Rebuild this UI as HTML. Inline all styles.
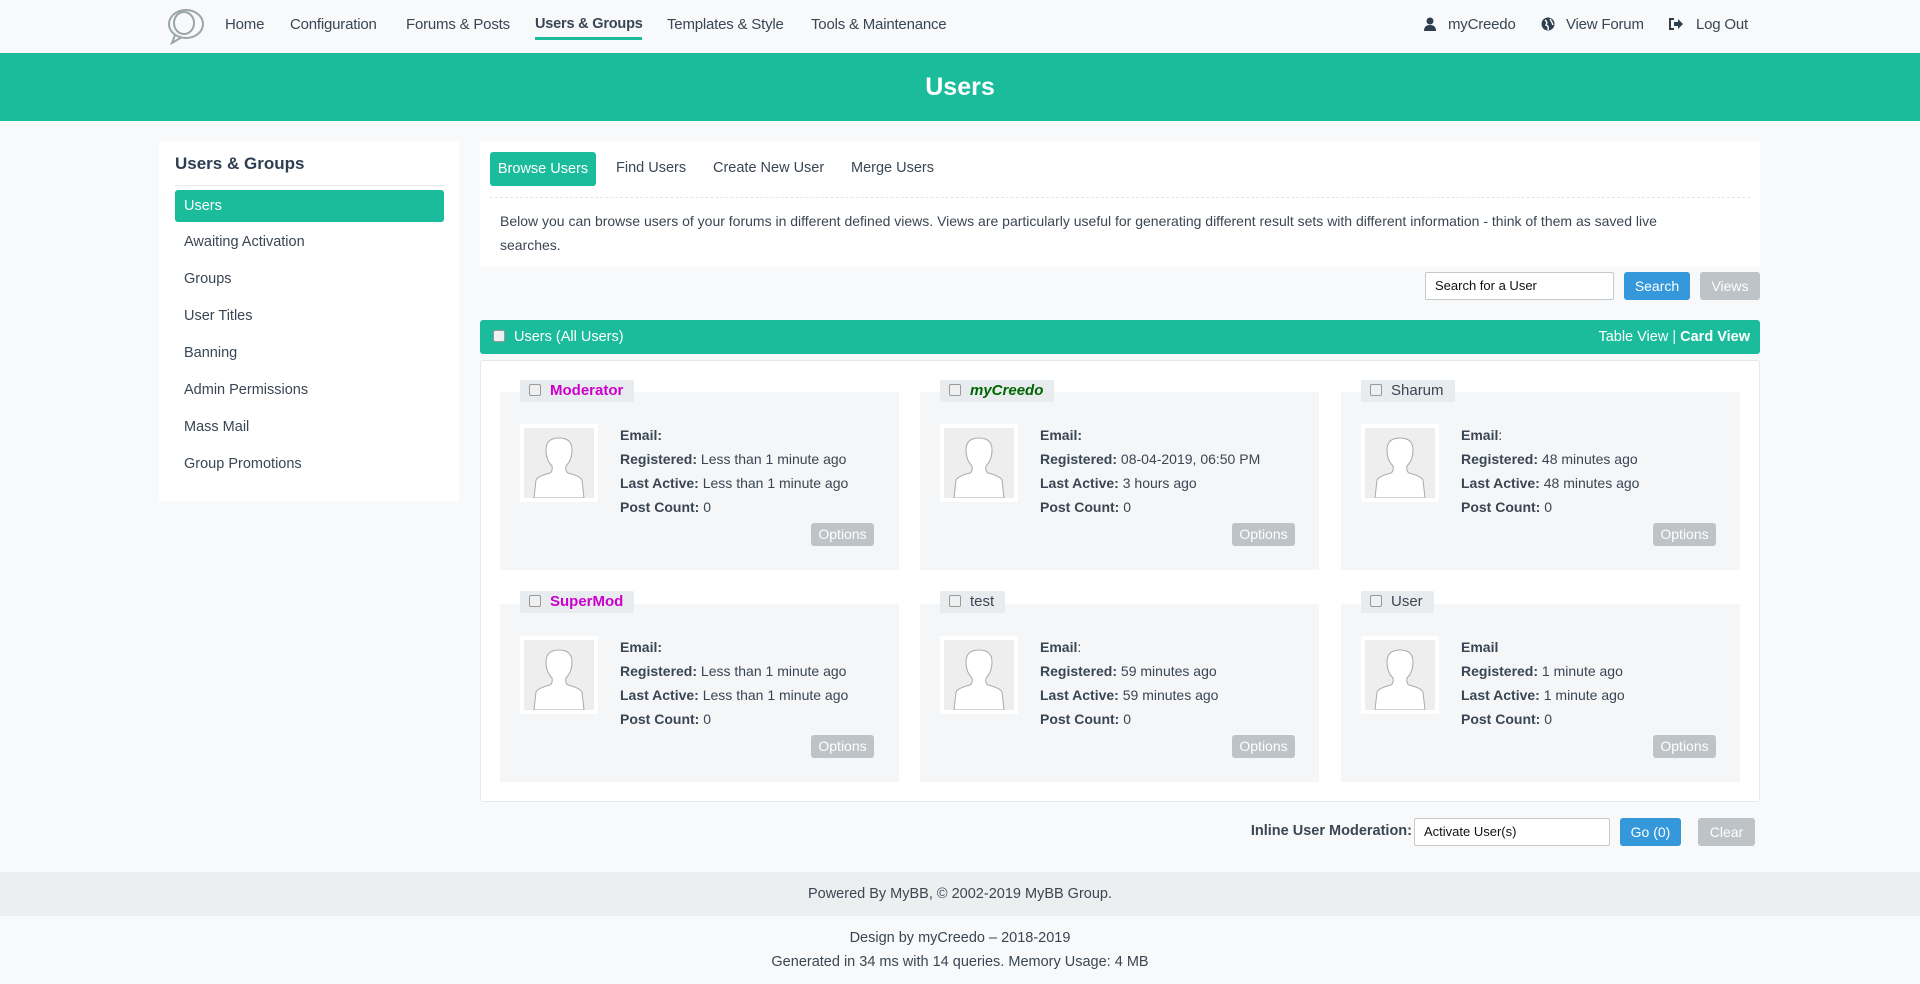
<!DOCTYPE html>
<html><head><meta charset="utf-8"><style>
*{box-sizing:border-box;margin:0;padding:0}
body{width:1920px;height:984px;background:#f7f9fa;font-family:"Liberation Sans",sans-serif;color:#3a4653;font-size:15px;position:relative;overflow:hidden}
.a{position:absolute;white-space:nowrap}
.nav{top:16px;font-size:15px;color:#3a4653;letter-spacing:-0.2px}
.banner{left:0;top:53px;width:1920px;height:68px;background:#1abc9c;color:#fff;font-size:25px;font-weight:bold;text-align:center;line-height:68px}
.box{background:#fff}
.side{left:159px;top:141px;width:300px;height:360px}
.si{left:175px;width:269px;height:32px;line-height:32px;padding-left:9px;font-size:14.5px}
.btn{border-radius:3px;color:#fff;font-size:14px;text-align:center}
.card{background:#f4f6f8;width:399px;height:178px}
.lbl{background:#e9ecee;height:22px;line-height:22px;font-size:15px;padding:0 11px 0 9px;border-radius:2px}
.cb{display:inline-block;width:12px;height:12px;border:1px solid #999;border-radius:2px;background:#f0f0f0;margin-right:9px;vertical-align:-1px}
.av{width:78px;height:78px;background:#fff;padding:4px}
.av div{width:100%;height:100%;background:#eee;overflow:hidden}
.info{font-size:14px;line-height:24px}
.info b{font-weight:bold}
.opt{background:#bdc3c7;width:63px;height:23px;line-height:23px}
</style></head><body>
<svg class="a" style="left:166px;top:7px" width="40" height="38" viewBox="0 0 40 38"><g fill="none" stroke="#9aa5a6" stroke-width="2"><ellipse cx="20" cy="17" rx="17" ry="14"/><ellipse cx="18" cy="16" rx="10" ry="11"/><path d="M9 28 L6 36 L16 30"/></g></svg>
<div class="a nav" style="left:225px">Home</div>
<div class="a nav" style="left:290px">Configuration</div>
<div class="a nav" style="left:406px">Forums &amp; Posts</div>
<div class="a nav" style="left:535px;font-weight:bold;font-size:14.5px">Users &amp; Groups</div>
<div class="a" style="left:535px;top:37px;width:107px;height:3px;background:#1abc9c"></div>
<div class="a nav" style="left:667px">Templates &amp; Style</div>
<div class="a nav" style="left:811px">Tools &amp; Maintenance</div>
<svg class="a" style="left:1424px;top:17px" width="12" height="14" viewBox="0 0 12 14"><circle cx="6" cy="4" r="3.5" fill="#2c3e50"/><path d="M0 14 Q0 8 6 8 Q12 8 12 14Z" fill="#2c3e50"/></svg>
<div class="a nav" style="left:1448px">myCreedo</div>
<svg class="a" style="left:1541px;top:17px" width="14" height="14"><circle cx="7" cy="7" r="6.5" fill="#2c3e50"/><path d="M4 3 Q7 5 5 8 Q8 9 7 13 M9 2 Q11 5 12 8" stroke="#f7f9fa" stroke-width="1.5" fill="none"/></svg>
<div class="a nav" style="left:1566px">View Forum</div>
<svg class="a" style="left:1669px;top:18px" width="15" height="12"><path d="M5 1 H1 V11 H5" stroke="#2c3e50" stroke-width="2" fill="none"/><path d="M5 4 H9 V1 L14 6 L9 11 V8 H5Z" fill="#2c3e50"/></svg>
<div class="a nav" style="left:1696px">Log Out</div>

<div class="a banner">Users</div>

<div class="a box side"></div>
<div class="a" style="left:175px;top:154px;font-size:17px;font-weight:bold;color:#2c3e50">Users &amp; Groups</div>
<div class="a" style="left:175px;top:185px;width:269px;height:1px;background:#e6e9eb"></div>
<div class="a si" style="top:190px;background:#1abc9c;color:#fff;border-radius:3px">Users</div>
<div class="a si" style="top:226px">Awaiting Activation</div>
<div class="a si" style="top:263px">Groups</div>
<div class="a si" style="top:300px">User Titles</div>
<div class="a si" style="top:337px">Banning</div>
<div class="a si" style="top:374px">Admin Permissions</div>
<div class="a si" style="top:411px">Mass Mail</div>
<div class="a si" style="top:448px">Group Promotions</div>

<div class="a box" style="left:480px;top:141px;width:1280px;height:125px"></div>
<div class="a btn" style="left:490px;top:152px;width:106px;height:34px;line-height:34px;background:#1abc9c;font-size:14.5px">Browse Users</div>
<div class="a" style="left:616px;top:160px;font-size:14.5px">Find Users</div>
<div class="a" style="left:713px;top:160px;font-size:14.5px">Create New User</div>
<div class="a" style="left:851px;top:160px;font-size:14.5px">Merge Users</div>
<div class="a" style="left:490px;top:197px;width:1260px;border-top:1px dashed #e3e6e8"></div>
<div class="a" style="left:500px;top:209px;line-height:24px;font-size:14px">Below you can browse users of your forums in different defined views. Views are particularly useful for generating different result sets with different information - think of them as saved live<br>searches.</div>

<div class="a" style="left:1425px;top:272px;width:189px;height:28px;background:#fff;border:1px solid #c5c9cc;border-radius:2px;font-size:13px;line-height:26px;padding-left:9px;color:#111">Search for a User</div>
<div class="a btn" style="left:1624px;top:272px;width:66px;height:28px;line-height:28px;background:#3498db">Search</div>
<div class="a btn" style="left:1700px;top:272px;width:60px;height:28px;line-height:28px;background:#bdc3c7">Views</div>

<div class="a" style="left:480px;top:320px;width:1280px;height:34px;background:#1abc9c;border-radius:3px;color:#fff;line-height:34px;font-size:14.5px">
<span class="cb" style="margin-left:13px;background:#f0f0f0"></span>Users (All Users)
<span style="position:absolute;right:10px">Table View | <b>Card View</b></span></div>

<div class="a box" style="left:480px;top:360px;width:1280px;height:442px;border:1px solid #e6e9eb;border-radius:3px"></div>

<div class="a card" style="left:500px;top:392px"></div>
<div class="a card" style="left:920px;top:392px"></div>
<div class="a card" style="left:1341px;top:392px"></div>
<div class="a card" style="left:500px;top:604px"></div>
<div class="a card" style="left:920px;top:604px"></div>
<div class="a card" style="left:1341px;top:604px"></div>

<div class="a lbl" style="left:520px;top:380px;color:#cc00cc;font-weight:bold"><span class="cb"></span>Moderator</div>
<div class="a lbl" style="left:940px;top:380px;color:#006600;font-weight:bold;font-style:italic"><span class="cb"></span>myCreedo</div>
<div class="a lbl" style="left:1361px;top:380px"><span class="cb"></span>Sharum</div>
<div class="a lbl" style="left:520px;top:591px;color:#cc00cc;font-weight:bold"><span class="cb"></span>SuperMod</div>
<div class="a lbl" style="left:940px;top:591px"><span class="cb"></span>test</div>
<div class="a lbl" style="left:1361px;top:591px"><span class="cb"></span>User</div>

<svg width="0" height="0" style="position:absolute"><defs><symbol id="p" viewBox="0 0 70 70"><path d="M10 70 L12 52 Q14 48 26 45 Q29 43 28 38 Q22 32 22 22 Q22 10 35 10 Q48 10 48 22 Q48 32 42 38 Q41 43 44 45 Q56 48 58 52 L60 70Z" fill="#fff" stroke="#aaa" stroke-width="1"/></symbol></defs></svg>

<div class="a av" style="left:520px;top:424px"><div><svg width="70" height="70"><use href="#p"/></svg></div></div>
<div class="a av" style="left:940px;top:424px"><div><svg width="70" height="70"><use href="#p"/></svg></div></div>
<div class="a av" style="left:1361px;top:424px"><div><svg width="70" height="70"><use href="#p"/></svg></div></div>
<div class="a av" style="left:520px;top:636px"><div><svg width="70" height="70"><use href="#p"/></svg></div></div>
<div class="a av" style="left:940px;top:636px"><div><svg width="70" height="70"><use href="#p"/></svg></div></div>
<div class="a av" style="left:1361px;top:636px"><div><svg width="70" height="70"><use href="#p"/></svg></div></div>

<div class="a info" style="left:620px;top:423px"><b>Email:</b><br><b>Registered:</b> Less than 1 minute ago<br><b>Last Active:</b> Less than 1 minute ago<br><b>Post Count:</b> 0</div>
<div class="a info" style="left:1040px;top:423px"><b>Email:</b><br><b>Registered:</b> 08-04-2019, 06:50 PM<br><b>Last Active:</b> 3 hours ago<br><b>Post Count:</b> 0</div>
<div class="a info" style="left:1461px;top:423px"><b>Email</b>:<br><b>Registered:</b> 48 minutes ago<br><b>Last Active:</b> 48 minutes ago<br><b>Post Count:</b> 0</div>
<div class="a info" style="left:620px;top:635px"><b>Email:</b><br><b>Registered:</b> Less than 1 minute ago<br><b>Last Active:</b> Less than 1 minute ago<br><b>Post Count:</b> 0</div>
<div class="a info" style="left:1040px;top:635px"><b>Email</b>:<br><b>Registered:</b> 59 minutes ago<br><b>Last Active:</b> 59 minutes ago<br><b>Post Count:</b> 0</div>
<div class="a info" style="left:1461px;top:635px"><b>Email</b><br><b>Registered:</b> 1 minute ago<br><b>Last Active:</b> 1 minute ago<br><b>Post Count:</b> 0</div>

<div class="a btn opt" style="left:811px;top:523px">Options</div>
<div class="a btn opt" style="left:1232px;top:523px">Options</div>
<div class="a btn opt" style="left:1653px;top:523px">Options</div>
<div class="a btn opt" style="left:811px;top:735px">Options</div>
<div class="a btn opt" style="left:1232px;top:735px">Options</div>
<div class="a btn opt" style="left:1653px;top:735px">Options</div>

<div class="a" style="left:1246px;top:823px;width:166px;text-align:right;font-weight:bold;font-size:14.5px">Inline User Moderation:</div>
<div class="a" style="left:1414px;top:818px;width:196px;height:28px;background:#fff;border:1px solid #c5c9cc;border-radius:2px;font-size:13px;line-height:26px;padding-left:9px;color:#111">Activate User(s)</div>
<div class="a btn" style="left:1620px;top:818px;width:61px;height:28px;line-height:28px;background:#3498db">Go (0)</div>
<div class="a btn" style="left:1698px;top:818px;width:57px;height:28px;line-height:28px;background:#bdc3c7">Clear</div>

<div class="a" style="left:0;top:872px;width:1920px;height:44px;background:#eceff0;text-align:center;line-height:44px;font-size:14.5px">Powered By MyBB, © 2002-2019 MyBB Group.</div>
<div class="a" style="left:0;top:926px;width:1920px;text-align:center;line-height:24px;font-size:14.5px">Design by myCreedo – 2018-2019<br>Generated in 34 ms with 14 queries. Memory Usage: 4 MB</div>
</body></html>
